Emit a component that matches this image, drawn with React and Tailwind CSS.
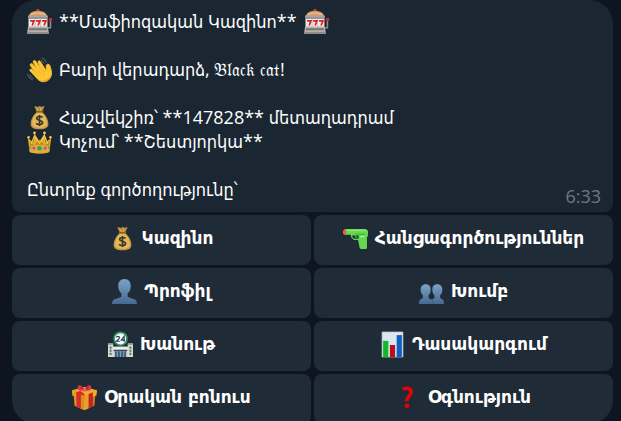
import React from "react";

const iconClass = "inline-block size-[25px] shrink-0 overflow-visible";

function SlotMachine() {
  return (
    <svg viewBox="0 0 24 24" className={iconClass} aria-hidden="true">
      <circle cx="10.5" cy="1.6" r="1.8" fill="#c8372f" />
      <path d="M2 7C2 4 5 2 10.500 2S19 4 19 7Z" fill="#d99a62" />
      <path d="M3.500 5.500C6 3.300 15 3.300 17.500 5.500" stroke="#f0bd85" strokeWidth="1.200" fill="none" />
      <rect x="1" y="6" width="19" height="3" rx="1" fill="#a9a7a6" />
      <rect x="1" y="8" width="19" height="9.500" fill="#8d8b8b" />
      <rect x="2" y="9.500" width="17" height="7.500" fill="#f6f3f0" />
      <path d="M7.800 9.500v7.500M13.200 9.500v7.500" stroke="#a8a4a2" strokeWidth=".7" />
      <path d="M3 11.500h3.600L5 15.800M8.700 11.500h3.600l-1.600 4.300M14.400 11.500H18l-1.600 4.300" fill="none" stroke="#dd1f1f" strokeWidth="1.700" />
      <path d="M1 17h19l1 6.500H0Z" fill="#b9b5ae" />
      <path d="M2 18.500h17l.4 2H1.600Z" fill="#77736f" />
      <path d="M0 22h21v2H0Z" fill="#8f8b86" />
      <path d="M20 18h2.500v-7" stroke="#8b8d90" strokeWidth="1.500" fill="none" />
      <circle cx="22.600" cy="10" r="1.700" fill="#d9262c" />
    </svg>
  );
}

function Wave() {
  return (
    <svg viewBox="0 0 24 24" className={iconClass} aria-hidden="true">
      <path d="M10.500 21.500 3 13.500c-1-1.300.5-2.700 1.800-1.600l3 2.500-4.500-6c-1-1.500 1-2.900 2.200-1.500l4.600 5.300-4-7c-.8-1.600 1.300-2.700 2.300-1.200l4.700 7-2.400-5.700c-.6-1.500 1.400-2.300 2.200-.8l5.300 8.300c.5-1.500.3-2.500.3-4.500 0-1.800 2.700-2 3.400-.2 1 3 2.200 6.500 1.400 9.600-.7 3-3.300 5.600-6.300 6-2.500.3-4.800-.6-6.500-2.200Z" fill="#fcc531" stroke="#fcc531" strokeWidth=".8" />
      <path d="m7.800 14.400 3.500 3.200M10.100 12.200l3.500 3.600M13.100 10.800l3 3.700M18.500 12.800c-2 .6-3 2.200-2.800 4" fill="none" stroke="#e5a51f" strokeWidth=".6" strokeLinecap="round" />
      <path d="M10.500 21.500c4 2.500 10 1 12-4-.3 3.500-3 6-6 6.200-2.300.1-4.500-.7-6-2.200Z" fill="#e89e20" />
      <path d="M14.300 1c2.200.7 3.600 2.100 4.300 4.100M13.600 3.400c1.300.5 2.200 1.500 2.700 2.700M.6 16.500c.7 2.700 2.300 4.500 4.800 5.500M2.800 17.200c.7 1.500 1.700 2.600 3.100 3.300" fill="none" stroke="#566069" strokeWidth="1" strokeLinecap="round" />
    </svg>
  );
}

function MoneyBag() {
  return (
    <svg viewBox="0 0 24 24" className={iconClass} aria-hidden="true">
      <path d="M9.500 6.500 7 1.500c1.500-.7 2.300.8 3.300.3C11.300 1.300 12 .5 13 1.400c1 .8 2.300-.7 4-.1L14.500 6.500Z" fill="#b8893d" />
      <path d="m9 2 2 4M13.500 2 12.600 6" stroke="#e1bb69" strokeWidth=".8" />
      <path d="M9.500 6.500h5c3 2.800 6 7 6 11.500 0 4-2.500 5.300-8.500 5.300S3.500 22 3.500 18c0-4.500 3-8.700 6-11.500Z" fill="#c39543" />
      <path d="M9.500 7.500C6 10.500 4.500 15 5 18.500c.3 2.500 2.500 3.500 7 3.500s6.700-1 7-3.500c.4-3.500-1.500-8-4.500-11Z" fill="#e0b75c" />
      <path d="M9 6.500h6" stroke="#886024" strokeWidth="1.500" strokeLinecap="round" />
      <path d="M15 11.800c-1-1-5.700-1.400-5.700 1s5.700 1.700 5.700 4.100c0 2.500-4.900 2.200-6.300.8M12 9.500v10.600" fill="none" stroke="#3f3528" strokeWidth="1.600" />
    </svg>
  );
}

function Crown() {
  return (
    <svg viewBox="0 0 24 24" className={iconClass} aria-hidden="true">
      <path d="M2.500 22 .8 8.500 6 13 7 4l5 8 5-8 1 9 5.200-4.500L21.500 22c-4.500 2-14.500 2-19 0Z" fill="#e3ae28" />
      <path d="m3 18-.5-6 4.500 3.500L12 10l5 5.500 4.500-3.500-.5 6c-4-1.800-14-1.800-18 0Z" fill="#bd861e" />
      <path d="M4 14.500 7.200 6.500l4.800 7 4.800-7 3.200 8" fill="none" stroke="#f0c647" strokeWidth="1.200" />
      <path d="M2.300 16.500c4-2 15.400-2 19.400 0L21.200 22c-4.500 1.800-13.900 1.800-18.400 0Z" fill="#e0ae30" />
      <g fill="#f3cf55"><circle cx="1.500" cy="8" r="1.200" /><circle cx="7.200" cy="3.800" r="1.300" /><circle cx="16.800" cy="3.800" r="1.300" /><circle cx="22.500" cy="8" r="1.200" /></g>
      <circle cx="12" cy="18.500" r="2.200" fill="#22a177" />
      <circle cx="6.600" cy="18.300" r="1.500" fill="#c34ba6" />
      <circle cx="17.400" cy="18.300" r="1.500" fill="#c34ba6" />
      <path d="M3 17v2M21 17v2" stroke="#249b73" strokeWidth="1.300" />
    </svg>
  );
}

function Pistol() {
  return (
    <svg viewBox="0 0 24 24" className={iconClass} aria-hidden="true">
      <path d="M2 3h19.500L24 4.500v4.700l-1 2V21l-.7 1H17l-1-1-1.500-7.500h-4L8 11l-.7-2.500H1.500Z" fill="#61d84e" />
      <path d="M2 3h20l1.500 2H1Z" fill="#8be56f" />
      <path d="M1.500 3H3v5.500H1.500L0 7.500v-3Z" fill="#ee6330" />
      <path d="M8.500 9h6.400v3.200H11C9.500 11.500 9 10.500 8.500 9Z" fill="#1f2c38" />
      <path d="M12 9c0 1.300.6 2 1.700 2.200" stroke="#61d84e" strokeWidth="1" fill="none" />
      <path d="M12 8h9" stroke="#38a936" strokeWidth=".8" />
      <path d="m16.500 10.500 4-.8" stroke="#b7f6a0" strokeWidth="1.300" />
    </svg>
  );
}

function Person() {
  return (
    <svg viewBox="0 0 24 24" className={iconClass} aria-hidden="true">
      <defs><linearGradient id="profile-blue" x1="0" y1="0" x2="0" y2="1"><stop stopColor="#7aa3c8" /><stop offset="1" stopColor="#466990" /></linearGradient></defs>
      <path d="M12 0c4 0 6 2.800 6 6.500 0 3.300-1 5.700-3 7.500v3c1.700 1.300 5.500 1.500 7.500 3 1 .8 1.500 2.300 1.500 4H0c0-1.700.5-3.200 1.500-4 2-1.500 5.800-1.700 7.500-3v-3c-2-1.800-3-4.200-3-7.500C6 2.800 8 0 12 0Z" fill="url(#profile-blue)" />
    </svg>
  );
}

function People() {
  return (
    <svg viewBox="0 0 24 24" className={iconClass} aria-hidden="true">
      <defs><linearGradient id="group-blue" x1="0" y1="0" x2="0" y2="1"><stop stopColor="#7aa3c8" /><stop offset="1" stopColor="#466990" /></linearGradient></defs>
      <path d="M6.500 5c3.300 0 4.700 2.200 4.700 5.300 0 2.500-.7 4-2 5.200v2.700c.7.700 1.500 1 2.800 1.500 1.300-.5 2.100-.8 2.800-1.500v-2.700c-1.300-1.200-2-2.700-2-5.200 0-3.100 1.400-5.300 4.700-5.300s4.900 2.200 4.900 5.300c0 2.500-.8 4-2.100 5.200v2.700c1.400 1.200 3.700.8 3.700 5.800H0c0-5 2.300-4.600 3.700-5.800v-2.700c-1.300-1.200-2.100-2.700-2.100-5.200C1.600 7.200 3.200 5 6.500 5Z" fill="url(#group-blue)" />
      <path d="M12 19.700c1 .5 1.500 2 1.500 4.300" stroke="#35516d" strokeWidth=".6" fill="none" />
    </svg>
  );
}

function Store() {
  return (
    <svg viewBox="0 0 24 24" className={iconClass} aria-hidden="true">
      <path d="M0 11h5v3h14v-3h5v13H0Z" fill="#dad9cc" />
      <path d="M0 11h5v1.500H0ZM19 11h5v1.500h-5Z" fill="#9fa29d" />
      <path d="M5 14.500h14v3H5Z" fill="#f0efe6" />
      <path d="M5.500 17h13v1.500h-13Z" fill="#36446a" />
      <path d="M6.500 18.500h11V24h-11Z" fill="#3f6384" />
      <path d="M9 18.500V24M12 18.500V24M15 18.500V24" stroke="#9abdd0" strokeWidth=".7" />
      <path d="M2.500 14v8M21.500 14v8" stroke="#4f7283" strokeWidth="1.800" strokeDasharray="2 1" />
      <circle cx="12" cy="6.500" r="6.200" fill="#fafafa" stroke="#2f9862" strokeWidth="1.600" />
      <path d="M8 5.300c.2-1.600 3-1.500 3 .1 0 1-1.300 1.800-3 3.500h3.300M15.500 9.300V4L12.700 7.800h3.700" fill="none" stroke="#30365b" strokeWidth="1.100" />
    </svg>
  );
}

function Chart() {
  return (
    <svg viewBox="0 0 24 24" className={iconClass} aria-hidden="true">
      <path d="M2 0h20v24H2Z" fill="#dce6ef" stroke="#bdc8d2" strokeWidth=".7" />
      <path d="M3 8.500h5V24H3Z" fill="#14b626" />
      <path d="M9.500 12.500h5V24h-5Z" fill="#b80f1d" />
      <path d="M16 3h5v21h-5Z" fill="#0d5fc1" />
    </svg>
  );
}

function Gift() {
  return (
    <svg viewBox="0 0 24 24" className={iconClass} aria-hidden="true">
      <path d="m1.500 9 10.500 4v11L2.500 20Z" fill="#dc951c" />
      <path d="m22.500 9-10.500 4v11l9.500-4Z" fill="#c87f12" />
      <path d="m0 5 12-3 12 3-.5 5L12 14 .5 10Z" fill="#efad29" />
      <path d="M12 8.500V14L.5 10 0 5Z" fill="#e39e1d" />
      <path d="m4 7 5-3 10 3-4 2.800v13l-3 1.200-6-2.500Z" fill="#efad29" />
      <path d="m4 7 4-1.300 4 3v4L8.500 22.500 4.500 21Z" fill="#d9272e" />
      <path d="m8.500 9 3.500 1.200V24l-3.500-1.500Z" fill="#d98f1c" />
      <path d="M12 10.200 16 8.700V22.400L12 24Z" fill="#e6a126" />
      <path d="m16 8.700 4-1.700v13.700l-4 1.700Z" fill="#c71f29" />
      <path d="M12 4.500C9-1 5.500-.5 5.500 2c-.2 2.500 1 4 6.500 3.500 5.500.5 6.700-1 6.500-3.500 0-2.500-3.500-3-6.500 2.500Z" fill="#e33643" />
      <path d="m8 2 3.500 2.500M16 2l-3.500 2.500" stroke="#a81932" strokeWidth="1" />
      <circle cx="12" cy="4.700" r="1.700" fill="#f25760" />
    </svg>
  );
}

function Question() {
  return (
    <svg viewBox="0 0 24 24" className={iconClass} aria-hidden="true">
      <path d="M6.500 4.300C9.500 2 14.500 3 14.500 6.800c0 4-4 3.900-4 7.700v1" fill="none" stroke="#e60303" strokeWidth="3.400" />
      <circle cx="10.500" cy="20" r="2.300" fill="#e60303" />
    </svg>
  );
}

const actions = [
  [MoneyBag, "Կազինո"],
  [Pistol, "Հանցագործություններ"],
  [Person, "Պրոֆիլ"],
  [People, "Խումբ"],
  [Store, "Խանութ"],
  [Chart, "Դասակարգում"],
  [Gift, "Օրական բոնուս"],
  [Question, "Օգնություն"],
];

function Line({ children }) {
  return <p className="flex h-6 items-center gap-[7px] whitespace-nowrap">{children}</p>;
}

export default function App() {
  return (
    <main className="h-screen overflow-hidden bg-[#0e1520] pr-2 pl-3 font-['Open_Sans','DejaVu_Sans_Condensed','DejaVu_Sans',sans-serif] text-lg text-white">
      <article className="flex items-end justify-between rounded-t-3xl rounded-b-lg bg-[#1a2632] pt-[9px] pr-3 pb-[2px] pl-[15px]">
        <div className="pb-[9px] leading-6">
          <Line><SlotMachine /><span>**Մաֆիոզական Կազինո**</span><SlotMachine /></Line>
          <div className="h-6" />
          <Line><Wave /><span>Բարի վերադարձ, 𝔅𝔩𝔞𝔠𝔨 𝔠𝔞𝔱!</span></Line>
          <div className="h-6" />
          <Line><MoneyBag /><span>Հաշվեկշիռ՝ **147828** մետաղադրամ</span></Line>
          <Line><Crown /><span>Կոչում՝ **Շեստյորկա**</span></Line>
          <div className="h-6" />
          <Line>Ընտրեք գործողությունը՝</Line>
        </div>
        <time className="leading-7 text-[#6b7985]">6:33</time>
      </article>
      <nav className="mt-[3px] grid grid-cols-2 gap-[3px]">
        {actions.map(([Icon, label]) => (
          <button
            key={label}
            type="button"
            className="flex h-[50px] items-center justify-center gap-[7px] rounded-lg bg-[#1f2b37] pb-[3px] font-['DejaVu_Sans',sans-serif] text-[17px] font-bold whitespace-nowrap nth-last-2:rounded-bl-3xl last:rounded-br-3xl"
          >
            <Icon />
            {label}
          </button>
        ))}
      </nav>
    </main>
  );
}
